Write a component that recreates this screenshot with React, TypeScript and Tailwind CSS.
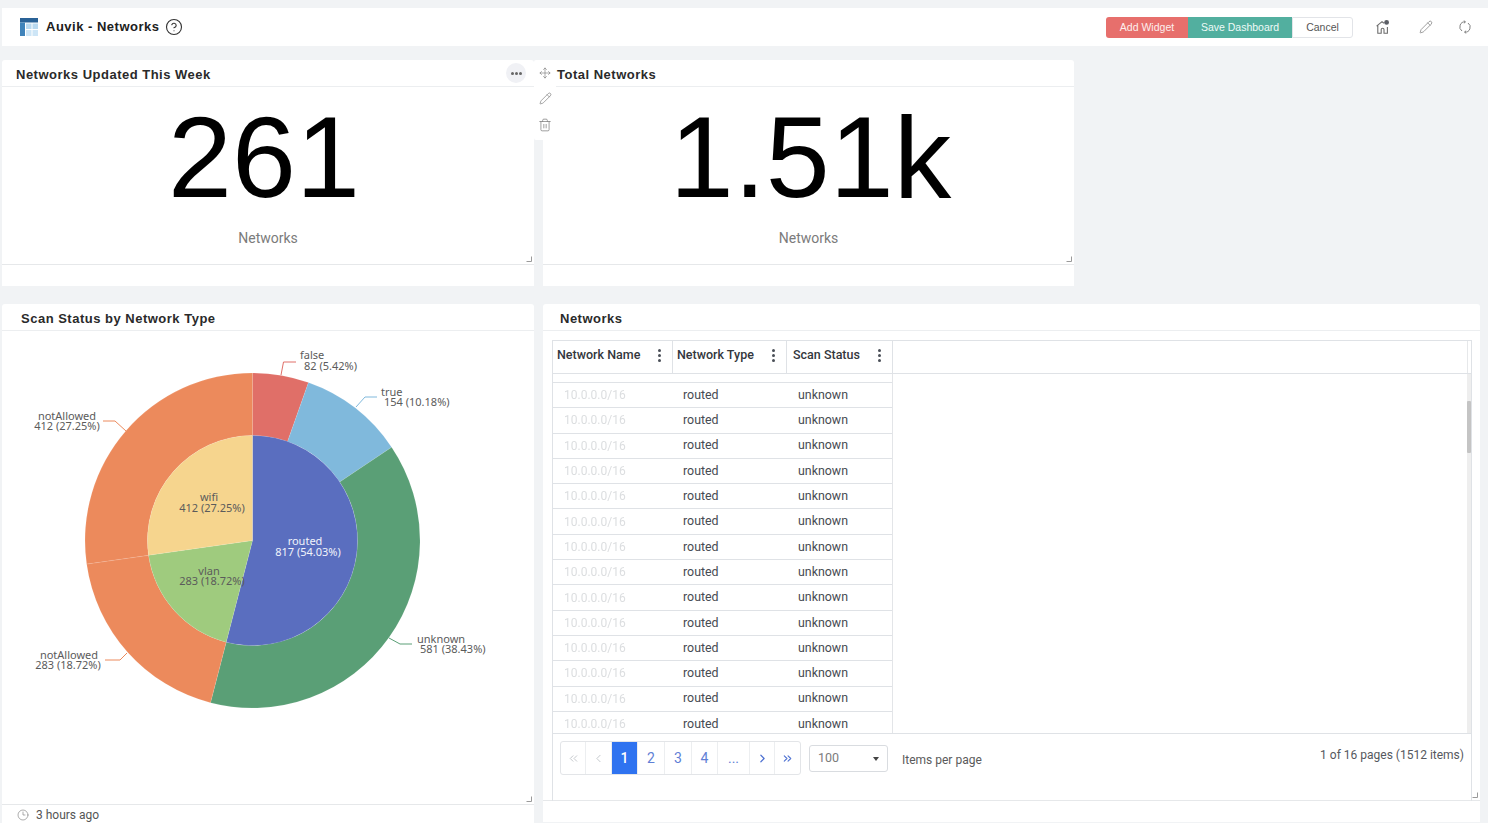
import React from "react";
import { CircleHelp, Pencil, Move, Trash2, Clock3, ChevronLeft, ChevronRight, ChevronsLeft, ChevronsRight } from "lucide-react";

const CX = 252.5;
const CY = 540.5;

function pt(r: number, frac: number): [number, number] {
  const a = frac * 2 * Math.PI;
  return [CX + r * Math.sin(a), CY - r * Math.cos(a)];
}

function arc(r0: number, r1: number, from: number, to: number) {
  const [ax, ay] = pt(r1, from);
  const [bx, by] = pt(r1, to);
  const [cx, cy] = pt(r0, to);
  const [dx, dy] = pt(r0, from);
  const large = to - from > 0.5 ? 1 : 0;
  if (r0 === 0) return `M${CX} ${CY}L${ax} ${ay}A${r1} ${r1} 0 ${large} 1 ${bx} ${by}Z`;
  return `M${ax} ${ay}A${r1} ${r1} 0 ${large} 1 ${bx} ${by}L${cx} ${cy}A${r0} ${r0} 0 ${large} 0 ${dx} ${dy}Z`;
}

const outer = [
  { v: 5.42, c: "#e06f68" },
  { v: 10.18, c: "#80b9dc" },
  { v: 38.43, c: "#5a9f76" },
  { v: 18.72, c: "#ec8a5c" },
  { v: 27.25, c: "#ec8a5c" },
];
const inner = [
  { v: 54.03, c: "#5a6ebf" },
  { v: 18.72, c: "#9fcb7e" },
  { v: 27.25, c: "#f6d58e" },
];

function slices(list: { v: number; c: string }[], r0: number, r1: number) {
  let acc = 0;
  return list.map((s, i) => {
    const from = acc / 100;
    acc += s.v;
    return <path key={i} d={arc(r0, r1, from, acc / 100)} fill={s.c} stroke="#ffffff" strokeOpacity={0.18} strokeWidth={0.5} />;
  });
}

const labels: { a: [number, number, string]; b: [number, number, string]; anchor?: "middle" | "start"; c?: string }[] = [
  { a: [300, 359, "false"], b: [304, 370, "82 (5.42%)"], anchor: "start" },
  { a: [381, 396, "true"], b: [384, 406, "154 (10.18%)"], anchor: "start" },
  { a: [67, 420, "notAllowed"], b: [67, 430, "412 (27.25%)"] },
  { a: [209, 501, "wifi"], b: [212, 512, "412 (27.25%)"] },
  { a: [209, 575, "vlan"], b: [212, 585, "283 (18.72%)"] },
  { a: [305, 545, "routed"], b: [308, 556, "817 (54.03%)"], c: "#f1f3fb" },
  { a: [69, 659, "notAllowed"], b: [68, 669, "283 (18.72%)"] },
  { a: [417, 643, "unknown"], b: [420, 653, "581 (38.43%)"], anchor: "start" },
];

function Chart() {
  return (
    <svg viewBox="2 331 532 473" className="block w-[532px] h-[473px]">
      {slices(outer, 105, 167.5)}
      {slices(inner, 0, 105)}
      <g fill="none" strokeWidth={1}>
        <polyline points="281,375 283.5,362 296,362" stroke="#e06f68" />
        <polyline points="356,407 365,397 377,397" stroke="#80b9dc" />
        <polyline points="103,421 115,421 126,431" stroke="#ec8a5c" />
        <polyline points="105,660 120,660 127,653" stroke="#ec8a5c" />
        <polyline points="389,638 400,644 412,644" stroke="#5a9f76" />
      </g>
      {labels.map((l, i) => (
        <text key={i} textAnchor={l.anchor ?? "middle"} fill={l.c ?? "#5b5b5b"} className="font-['Noto_Sans',sans-serif] text-[11px]">
          <tspan x={l.a[0]} y={l.a[1]}>{l.a[2]}</tspan>
          <tspan x={l.b[0]} y={l.b[1]}>{l.b[2]}</tspan>
        </text>
      ))}
    </svg>
  );
}

function Resize() {
  return (
    <svg viewBox="0 0 6 6" className="absolute right-[2px] bottom-[2px] w-[6px] h-[6px]">
      <path d="M5.5 0.5V5.5H0.5" fill="none" stroke="#9a9a9a" strokeWidth={1} />
    </svg>
  );
}

function CardTitle({ children, pl }: { children: React.ReactNode; pl: string }) {
  return (
    <div className={`h-[27px] shrink-0 flex items-center pt-[3px] border-b border-[#eceef0] ${pl} text-[13px] font-bold tracking-[0.5px] text-[#2a2a2a] font-['Liberation_Sans',sans-serif]`}>
      {children}
    </div>
  );
}

function Stat({ value, title, width, shift }: { value: string; title: string; width: string; shift: string }) {
  return (
    <section className={`${width} h-[226px] bg-white rounded-t-[3px] flex flex-col shrink-0`}>
      <CardTitle pl="pl-[14px]">{title}</CardTitle>
      <div className="relative h-[178px] flex flex-col items-center border-b border-[#e6e8ea]">
        <div className={`h-[136px] mt-[2px] flex items-center text-[115px] leading-none text-black font-['Liberation_Sans',sans-serif] ${shift}`}>{value}</div>
        <div className="text-[14px] leading-[18px] mt-[4px] text-[#7b7b7b] font-['Roboto',sans-serif]">{"Networks"}</div>
        <Resize />
      </div>
    </section>
  );
}

const COLS = "grid grid-cols-[120px_114px_106px]";
const rows = Array.from({ length: 14 });

function Dots() {
  return (
    <span className="flex flex-col gap-[2px]">
      <i className="block w-[3px] h-[3px] rounded-full bg-[#4a4f57]" />
      <i className="block w-[3px] h-[3px] rounded-full bg-[#4a4f57]" />
      <i className="block w-[3px] h-[3px] rounded-full bg-[#4a4f57]" />
    </span>
  );
}

function HeadCell({ t, last }: { t: string; last?: boolean }) {
  return (
    <div className={`flex items-center justify-between ${last ? "pl-[6px]" : "pl-[4px]"} pr-[11px] pb-[3px] text-[12.5px] font-medium text-[#33373d] border-r border-[#dfe2e6]`}>
      <span>{t}</span>
      <Dots />
    </div>
  );
}

const chev = "w-[13px] h-[13px]";
const pages: { k: string; w: string; c: string; n: React.ReactNode }[] = [
  { k: "first", w: "w-[25px]", c: "text-[#c3c7cc]", n: <ChevronsLeft className={chev} strokeWidth={1.8} /> },
  { k: "prev", w: "w-[26px]", c: "text-[#c3c7cc]", n: <ChevronLeft className={chev} strokeWidth={1.8} /> },
  { k: "1", w: "w-[26px]", c: "text-white bg-[#2f73f0] font-medium", n: "1" },
  { k: "2", w: "w-[27px]", c: "text-[#5f7fd6]", n: "2" },
  { k: "3", w: "w-[27px]", c: "text-[#5f7fd6]", n: "3" },
  { k: "4", w: "w-[26px]", c: "text-[#5f7fd6]", n: "4" },
  { k: "more", w: "w-[32px]", c: "text-[#5f7fd6]", n: "..." },
  { k: "next", w: "w-[25px]", c: "text-[#4f72d2]", n: <ChevronRight className={chev} strokeWidth={2.2} /> },
  { k: "last", w: "w-[25px]", c: "text-[#4f72d2]", n: <ChevronsRight className={chev} strokeWidth={2} /> },
];

function TableIcon() {
  return (
    <svg viewBox="0 0 18 18" className="w-[18px] h-[18px] shrink-0">
      <rect x="0" y="0" width="18" height="4.5" fill="#2a6297" />
      <rect x="0" y="4.5" width="5" height="13.5" fill="#3f83ba" />
      <rect x="6" y="5.5" width="5.5" height="5.5" fill="#b9d9f0" />
      <rect x="12.5" y="5.5" width="5.5" height="5.5" fill="#b9d9f0" />
      <rect x="6" y="12" width="5.5" height="6" fill="#cde5f6" />
      <rect x="12.5" y="12" width="5.5" height="6" fill="#cde5f6" />
    </svg>
  );
}

function HomeIcon() {
  return (
    <svg viewBox="0 0 16 16" fill="none" stroke="#6e6e6e" strokeWidth={1.1} className="w-[16px] h-[16px]">
      <path d="M1.6 7.2 7 2.6l2 1.6M2.8 6.6v7.6h3.4v-3.6a1.4 1.4 0 0 1 2.8 0v3.6h3.4V8" />
      <circle cx="11.6" cy="3.4" r="2.4" fill="#5c5f66" stroke="none" />
    </svg>
  );
}

function SyncIcon() {
  return (
    <svg viewBox="0 0 14 14" fill="none" stroke="#808080" strokeWidth={1} className="w-[14px] h-[14px]">
      <path d="M7.4 1.9A5 5 0 0 0 4 11M6.6 12.1A5 5 0 0 0 10 3" />
      <path d="M5.8 0.6 7.4 1.9 5.9 3.3M8.2 13.4 6.6 12.1 8.1 10.7" />
    </svg>
  );
}

export default function App() {
  return (
    <div className="relative h-[823px] w-[1488px] overflow-hidden bg-[#f1f3f5] pt-[8px] pl-[2px] font-['Roboto',sans-serif]">
      <header className="h-[38px] bg-white flex items-center pl-[18px] pr-[16px]">
        <TableIcon />
        <h1 className="ml-[8px] text-[13px] font-bold tracking-[0.5px] text-[#202020] font-['Liberation_Sans',sans-serif]">Auvik - Networks</h1>
        <CircleHelp className="ml-[6px] w-[18px] h-[18px] text-[#333]" strokeWidth={1.5} />
        <div className="ml-auto flex items-center h-[21px] text-[10.5px] font-['Liberation_Sans',sans-serif]">
          <span className="w-[82px] h-full flex items-center justify-center pt-[1px] bg-[#e76f6c] text-[#fdeeee] rounded-l-[3px]">Add Widget</span>
          <span className="w-[104px] h-full flex items-center justify-center pt-[1px] bg-[#52af9f] text-[#eefaf7]">Save Dashboard</span>
          <span className="w-[61px] h-full flex items-center justify-center pt-[1px] bg-white text-[#555] border border-[#e2e4e8] rounded-r-[3px]">Cancel</span>
          <span className="ml-[22px] w-[16px]"><HomeIcon /></span>
          <Pencil className="ml-[28px] w-[14px] h-[14px] text-[#777]" strokeWidth={1.2} />
          <span className="ml-[25px]"><SyncIcon /></span>
        </div>
      </header>

      <div className="mt-[14px] flex gap-[9px]">
        <Stat value="261" title="Networks Updated This Week" width="w-[532px]" shift="-translate-x-[4px]" />
        <Stat value="1.51k" title="Total Networks" width="w-[531px]" shift="translate-x-[2px]" />
      </div>

      <div className="mt-[18px] flex gap-[9px] items-start">
        <section className="w-[532px] h-[540px] bg-white rounded-t-[3px] flex flex-col shrink-0">
          <CardTitle pl="pl-[19px]">Scan Status by Network Type</CardTitle>
          <div className="relative h-[474px] border-b border-[#e6e8ea]">
            <Chart />
            <Resize />
          </div>
          <div className="flex items-center h-[19px] pl-[15px] text-[12px] text-[#555]">
            <Clock3 className="w-[12px] h-[12px] text-[#777]" strokeWidth={1.2} />
            <span className="ml-[7px]">3 hours ago</span>
          </div>
        </section>

        <section className="w-[937px] h-[518px] bg-white rounded-t-[3px] flex flex-col shrink-0">
          <CardTitle pl="pl-[17px]">Networks</CardTitle>
          <div className="relative h-[470px] pt-[9px] pl-[9px] pr-[8px] border-b border-[#e6e8ea]">
            <div className="h-[461px] border-x border-[#dfe2e6] flex flex-col">
              <div className={`relative ${COLS} h-[34px] border-y border-[#dfe2e6] shrink-0`}>
                <HeadCell t="Network Name" />
                <HeadCell t="Network Type" />
                <HeadCell t="Scan Status" last />
                <i className="absolute right-[3px] top-0 h-full border-r border-[#e6e8ea]" />
              </div>
              <div className="relative h-[360px] shrink-0 overflow-hidden border-b border-[#dfe2e6]">
                <div className="w-[340px] border-r border-[#e3e5e8] pt-[8px] h-full">
                  {rows.map((_, i) => (
                    <div key={i} className={`${COLS} h-[25.3px] border-t border-[#dfe2e6] text-[12.4px] text-[#474b52] items-center`}>
                      <span className="pl-[11px] text-[12px] text-[#dcdee0] blur-[0.7px]">10.0.0.0/16</span>
                      <span className="pl-[10px]">routed</span>
                      <span className="pl-[11px]">unknown</span>
                    </div>
                  ))}
                </div>
                <div className="absolute right-0 top-0 h-full w-[4px] bg-[#eeeeee]">
                  <div className="mt-[27px] h-[52px] w-[4px] bg-[#c4c4c4] rounded-[1px]" />
                </div>
              </div>
              <div className="relative flex-1 pl-[7px] pt-[7px] text-[12px]">
                <div className="flex items-start">
                  <div className="flex h-[34px] border border-[#e3e5e8] rounded-[3px] overflow-hidden">
                    {pages.map((p) => (
                      <span key={p.k} className={`${p.w} flex items-center justify-center border-r border-[#eceef0] last:border-r-0 text-[14px] ${p.c}`}>{p.n}</span>
                    ))}
                  </div>
                  <div className="ml-[8px] mt-[4px] w-[79px] h-[27px] border border-[#d9dce0] rounded-[3px] flex items-center justify-between pl-[8px] pr-[8px] text-[12.5px] text-[#7c7c7c]">
                    <span>100</span>
                    <svg viewBox="0 0 6 4" className="w-[6px] h-[4px]"><path d="M0 0h6L3 4z" fill="#444" /></svg>
                  </div>
                  <span className="ml-[14px] mt-[10px] text-[#5a5a5a]">Items per page</span>
                </div>
                <span className="absolute right-[7px] top-[12px] text-[#55585e]">1 of 16 pages (1512 items)</span>
              </div>
            </div>
            <Resize />
          </div>
        </section>
      </div>

      <div className="absolute left-[534px] top-[60px] w-[22px] h-[80px] flex flex-col items-center bg-white rounded-[2px]">
        <Move className="mt-[7px] w-[12px] h-[12px] text-[#777]" strokeWidth={1.2} />
        <Pencil className="mt-[13px] w-[13px] h-[13px] text-[#777]" strokeWidth={1.2} />
        <Trash2 className="mt-[13px] w-[14px] h-[14px] text-[#777]" strokeWidth={1.2} />
      </div>
      <div className="absolute left-[506px] top-[63px] w-[20px] h-[20px] rounded-full bg-[#f0f1f5] flex items-center justify-center gap-[1px]">
        <i className="w-[3px] h-[3px] rounded-full bg-[#666]" />
        <i className="w-[3px] h-[3px] rounded-full bg-[#666]" />
        <i className="w-[3px] h-[3px] rounded-full bg-[#666]" />
      </div>
    </div>
  );
}
